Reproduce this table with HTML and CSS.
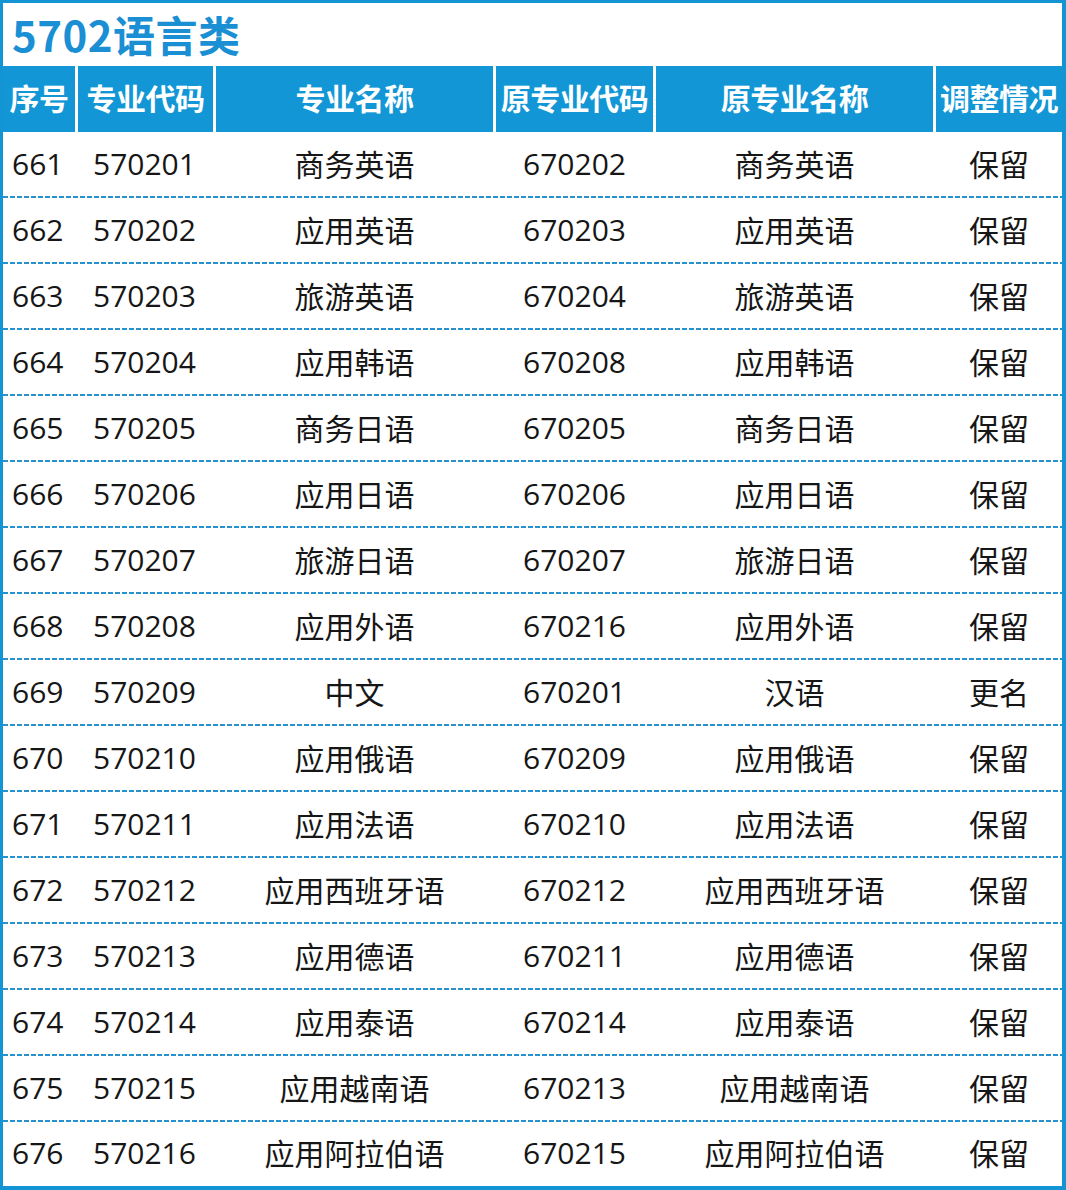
FILE: index.html
```html
<!DOCTYPE html>
<html lang="zh-CN">
<head>
<meta charset="utf-8">
<title>5702语言类</title>
<link rel="stylesheet" href="styles.css">
</head>
<body>
<div class="sheet">
  <div class="title">5702语言类</div>
  <div class="head">
    <div class="hc">序号</div>
    <div class="hc">专业代码</div>
    <div class="hc">专业名称</div>
    <div class="hc">原专业代码</div>
    <div class="hc">原专业名称</div>
    <div class="hc">调整情况</div>
  </div>
  <div class="body">
    <div class="row"><div class="c no">661</div><div class="c code">570201</div><div class="c mid">商务英语</div><div class="c mid">670202</div><div class="c mid">商务英语</div><div class="c mid">保留</div></div>
    <div class="row"><div class="c no">662</div><div class="c code">570202</div><div class="c mid">应用英语</div><div class="c mid">670203</div><div class="c mid">应用英语</div><div class="c mid">保留</div></div>
    <div class="row"><div class="c no">663</div><div class="c code">570203</div><div class="c mid">旅游英语</div><div class="c mid">670204</div><div class="c mid">旅游英语</div><div class="c mid">保留</div></div>
    <div class="row"><div class="c no">664</div><div class="c code">570204</div><div class="c mid">应用韩语</div><div class="c mid">670208</div><div class="c mid">应用韩语</div><div class="c mid">保留</div></div>
    <div class="row"><div class="c no">665</div><div class="c code">570205</div><div class="c mid">商务日语</div><div class="c mid">670205</div><div class="c mid">商务日语</div><div class="c mid">保留</div></div>
    <div class="row"><div class="c no">666</div><div class="c code">570206</div><div class="c mid">应用日语</div><div class="c mid">670206</div><div class="c mid">应用日语</div><div class="c mid">保留</div></div>
    <div class="row"><div class="c no">667</div><div class="c code">570207</div><div class="c mid">旅游日语</div><div class="c mid">670207</div><div class="c mid">旅游日语</div><div class="c mid">保留</div></div>
    <div class="row"><div class="c no">668</div><div class="c code">570208</div><div class="c mid">应用外语</div><div class="c mid">670216</div><div class="c mid">应用外语</div><div class="c mid">保留</div></div>
    <div class="row"><div class="c no">669</div><div class="c code">570209</div><div class="c mid">中文</div><div class="c mid">670201</div><div class="c mid">汉语</div><div class="c mid">更名</div></div>
    <div class="row"><div class="c no">670</div><div class="c code">570210</div><div class="c mid">应用俄语</div><div class="c mid">670209</div><div class="c mid">应用俄语</div><div class="c mid">保留</div></div>
    <div class="row"><div class="c no">671</div><div class="c code">570211</div><div class="c mid">应用法语</div><div class="c mid">670210</div><div class="c mid">应用法语</div><div class="c mid">保留</div></div>
    <div class="row"><div class="c no">672</div><div class="c code">570212</div><div class="c mid">应用西班牙语</div><div class="c mid">670212</div><div class="c mid">应用西班牙语</div><div class="c mid">保留</div></div>
    <div class="row"><div class="c no">673</div><div class="c code">570213</div><div class="c mid">应用德语</div><div class="c mid">670211</div><div class="c mid">应用德语</div><div class="c mid">保留</div></div>
    <div class="row"><div class="c no">674</div><div class="c code">570214</div><div class="c mid">应用泰语</div><div class="c mid">670214</div><div class="c mid">应用泰语</div><div class="c mid">保留</div></div>
    <div class="row"><div class="c no">675</div><div class="c code">570215</div><div class="c mid">应用越南语</div><div class="c mid">670213</div><div class="c mid">应用越南语</div><div class="c mid">保留</div></div>
    <div class="row last"><div class="c no">676</div><div class="c code">570216</div><div class="c mid">应用阿拉伯语</div><div class="c mid">670215</div><div class="c mid">应用阿拉伯语</div><div class="c mid">保留</div></div>
  </div>
</div>
</body>
</html>
```
FILE: styles.css
```css
* { box-sizing: border-box; }
html, body { margin: 0; padding: 0; background: #ffffff; }
body {
  font-family: "Open Sans", "Noto Sans CJK SC", sans-serif;
  width: 1066px;
  height: 1190px;
  overflow: hidden;
}
.sheet {
  width: 1066px;
  height: 1190px;
  border-style: solid;
  border-color: #1395d4;
  border-width: 3px 4px 4px 3px;
  background: #ffffff;
}
.title {
  height: 63px;
  padding-left: 9px;
  padding-bottom: 2px;
  display: flex;
  align-items: center;
  font-family: "Noto Sans CJK SC", sans-serif;
  font-size: 42px;
  font-weight: 700;
  color: #1a8fd3;
  letter-spacing: 0.5px;
}
.head {
  height: 66px;
  display: grid;
  grid-template-columns: 72px 135px 277px 157px 277px 126px;
  column-gap: 3px;
  background: #ffffff;
}
.hc {
  background: #1296d5;
  color: #ffffff;
  font-family: "Noto Sans CJK SC", sans-serif;
  font-size: 30px;
  font-weight: 700;
  display: flex;
  align-items: center;
  justify-content: center;
  white-space: nowrap;
  letter-spacing: -0.5px;
  padding-bottom: 4px;
}
.row {
  height: 66px;
  display: grid;
  grid-template-columns: 72px 135px 277px 157px 277px 126px;
  column-gap: 3px;
  background-image: repeating-linear-gradient(to right, #2892cf 0 5px, transparent 5px 7px);
  background-repeat: no-repeat;
  background-size: 100% 2px;
  background-position: 0 100%;
}
.row.last {
  height: 64px;
  background-image: none;
}
.c {
  display: flex;
  align-items: center;
  font-size: 30px;
  color: #161616;
  white-space: nowrap;
  padding-bottom: 4px;
}
.no { padding-left: 9px; }
.code { padding-left: 15px; }
.mid { justify-content: center; }
```
